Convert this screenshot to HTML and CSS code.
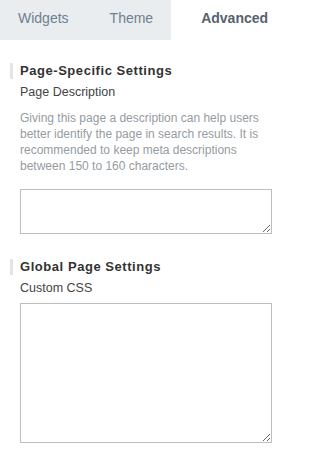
FILE: index.html
```html
<!DOCTYPE html>
<html lang="en">
<head>
<meta charset="utf-8">
<title>Advanced settings</title>
<link rel="stylesheet" href="styles.css">
</head>
<body>
<div class="panel">
  <nav class="tabs">
    <div class="tab tab-first">Widgets</div>
    <div class="tab">Theme</div>
    <div class="tab tab-active">Advanced</div>
  </nav>
  <div class="content">
    <section class="section">
      <h2 class="section-title">Page-Specific Settings</h2>
      <label class="field-label" for="desc">Page Description</label>
      <p class="help">Giving this page a description can help users better identify the page in search results. It is recommended to keep meta descriptions between 150 to 160 characters.</p>
      <textarea id="desc" class="input input-short"></textarea>
    </section>
    <section class="section section-second">
      <h2 class="section-title">Global Page Settings</h2>
      <label class="field-label field-label-tight" for="css">Custom CSS</label>
      <textarea id="css" class="input input-tall"></textarea>
    </section>
  </div>
</div>
</body>
</html>
```
FILE: styles.css
```css
* { box-sizing: border-box; }
html, body {
  margin: 0;
  padding: 0;
  background: #ffffff;
}
body {
  font-family: "Liberation Sans", Arial, sans-serif;
  color: #333333;
}
.panel {
  width: 292px;
}
.tabs {
  display: flex;
  height: 40px;
  background: #e9edef;
}
.tab {
  padding: 10px 18px 0 18px;
  font-size: 14px;
  line-height: 16px;
  color: #6f8090;
  white-space: nowrap;
}
.tab-first {
  padding-right: 23px;
}
.tab-active {
  flex: 1;
  padding-left: 30px;
  background: #ffffff;
  font-weight: bold;
  color: #57626c;
}
.content {
  padding: 23px 20px 0 20px;
}
.section {
  display: flex;
  flex-direction: column;
}
.section-second {
  margin-top: 25px;
}
.section-title {
  margin: 0 0 0 -10px;
  padding-left: 7px;
  border-left: 3px solid #e1e5e8;
  font-size: 13px;
  line-height: 16px;
  font-weight: bold;
  letter-spacing: 0.55px;
  color: #333333;
}
.field-label {
  display: block;
  margin-top: 5px;
  font-size: 12.5px;
  line-height: 16px;
  color: #444444;
}
.help {
  margin: 10px 0 15px 0;
  font-size: 12px;
  line-height: 16px;
  color: #959ca2;
}
.field-label-tight {
  margin-bottom: 7px;
}
.input {
  display: block;
  width: 252px;
  margin: 0;
  border: 1px solid #b8c0c5;
  border-radius: 0;
  background: #ffffff;
  font-family: "Liberation Sans", Arial, sans-serif;
  font-size: 12px;
}
.input-short {
  height: 45px;
}
.input-tall {
  height: 140px;
}
```
